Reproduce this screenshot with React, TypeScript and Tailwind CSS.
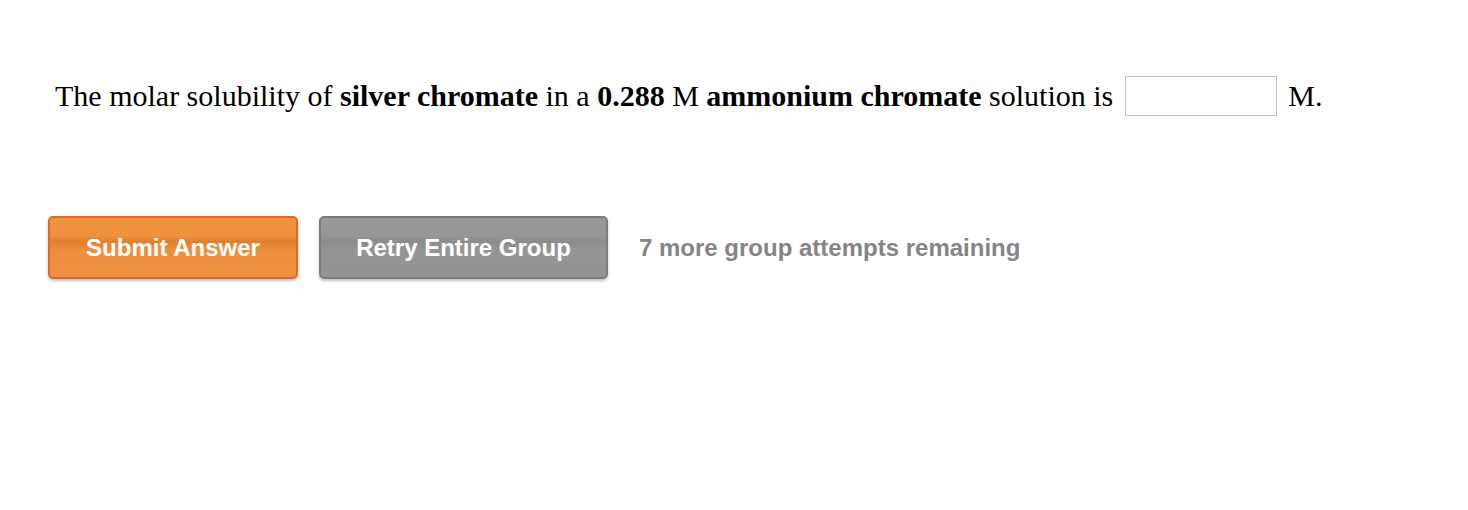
import { useState } from 'react'

export default function App() {
  const [answer, setAnswer] = useState('')

  return (
    <main className="min-h-[510px] bg-white">
      <div className="pl-[55px] pt-[74px]">
        {/* Question prompt */}
        <p className="flex items-center text-[30px] leading-[44px] text-black font-['Liberation_Serif','Times_New_Roman',serif]">
          <span>
            The molar solubility of <b>silver chromate</b> in a <b>0.288</b> M{' '}
            <b>ammonium chromate</b> solution is
          </span>
          <input
            type="text"
            value={answer}
            onChange={(e) => setAnswer(e.target.value)}
            aria-label="molar solubility"
            className="ml-[12px] w-[152px] h-[40px] border border-[#c2c2c2] bg-white px-2 text-[20px] outline-none"
          />
          <span className="ml-[11px]">M.</span>
        </p>
      </div>

      {/* Actions */}
      <div className="mt-[98px] flex items-center pl-[48px] font-['Liberation_Sans',Arial,sans-serif] font-bold text-[24px]">
        <button className="w-[250px] h-[63px] rounded-[5px] border-2 border-[#e2682a] text-white bg-[linear-gradient(to_bottom,#f1943f_0%,#ef913d_30%,#e0802f_40%,#ee8f3d_55%,#f0913f_100%)] shadow-[0_2px_3px_rgba(0,0,0,0.25)]">
          Submit Answer
        </button>
        <button className="ml-[21px] w-[289px] h-[63px] rounded-[5px] border-2 border-[#7c7c7c] text-white bg-[linear-gradient(to_bottom,#999999_0%,#979797_30%,#8c8c8c_40%,#959595_55%,#939393_100%)] shadow-[0_2px_3px_rgba(0,0,0,0.25)]">
          Retry Entire Group
        </button>
        <span className="ml-[31px] text-[#858585]">7 more group attempts remaining</span>
      </div>
    </main>
  )
}
